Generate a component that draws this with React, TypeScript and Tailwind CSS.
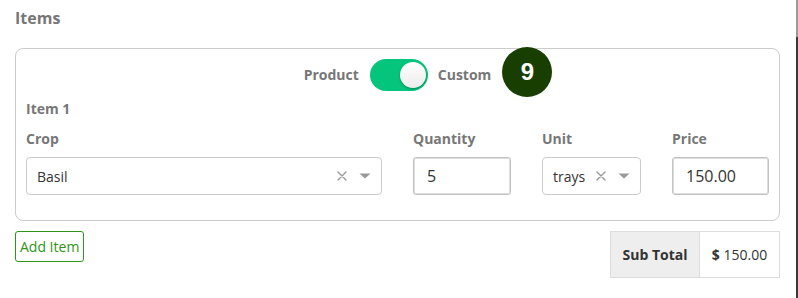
import React from "react";

const Caret = () => (
  <svg width="12" height="6" viewBox="0 0 12 6" className="shrink-0">
    <path d="M0.5 0.5 L11.5 0.5 L6 5.5 Z" fill="#999" />
  </svg>
);

const Clear = () => (
  <svg width="10" height="10" viewBox="0 0 10 10" className="shrink-0">
    <path d="M1 1 L9 9 M9 1 L1 9" stroke="#999" strokeWidth="1.4" strokeLinecap="round" />
  </svg>
);

const Label = ({ children }: { children: React.ReactNode }) => (
  <div className="text-[14px] leading-[20px] font-bold text-[#777] h-[20px] mb-[8px]">{children}</div>
);

export default function App() {
  return (
    <div
      className="flex h-[298px] w-[798px] bg-white overflow-hidden"
      style={{ fontFamily: '"Open Sans", "Noto Sans", sans-serif' }}
    >
      <div className="flex-1 pl-[15px] pr-[16px] pt-[6px]">
        <h2 className="text-[16px] leading-[24px] font-bold text-[#777]">Items</h2>
        <div className="mt-[18px] border border-[#cccccc] rounded-[8px] px-[10px] pt-[10px] pb-[25px]">
          <div className="flex justify-center items-center h-[32px]">
            <span className="text-[14px] leading-[20px] font-bold text-[#777]">Product</span>
            <div className="ml-[11px] w-[58px] h-[32px] rounded-full bg-[#05c47c] flex items-center justify-end pr-[2px]">
              <div className="w-[26px] h-[26px] rounded-full bg-gradient-to-b from-white to-[#ececec] shadow-[0_1px_2px_rgba(0,0,0,0.35)]" />
            </div>
            <span className="relative ml-[10px] text-[14px] leading-[20px] font-bold text-[#777]">
              Custom
              <span className="absolute left-[calc(100%+11px)] top-[-18px] w-[50px] h-[50px] rounded-full bg-[#183e02] flex items-center justify-center text-white text-[24px] font-bold leading-none font-['Liberation_Sans',Arial,sans-serif]">
                9
              </span>
            </span>
          </div>
          <div className="mt-[8px] text-[14px] leading-[20px] font-bold text-[#777]">Item 1</div>
          <div className="mt-[10px] grid grid-cols-[1fr_98px_99px_97px] gap-x-[31px]">
            <div>
              <Label>Crop</Label>
              <div className="h-[38px] border border-[#cccccc] rounded-[4px] flex items-center pl-[10px] pr-[10px]">
                <span className="flex-1 text-[14px] text-[#333]">Basil</span>
                <Clear />
                <span className="ml-[12px]">
                  <Caret />
                </span>
              </div>
            </div>
            <div>
              <Label>Quantity</Label>
              <div className="h-[38px] border border-[#c2c2c2] rounded-[3px] shadow-[inset_0_0_0_1px_#dedede] flex items-center pl-[13px] text-[16px] text-[#333]">
                5
              </div>
            </div>
            <div>
              <Label>Unit</Label>
              <div className="h-[38px] border border-[#cccccc] rounded-[4px] flex items-center pl-[10px] pr-[10px]">
                <span className="flex-1 text-[14px] text-[#333]">trays</span>
                <Clear />
                <span className="ml-[12px]">
                  <Caret />
                </span>
              </div>
            </div>
            <div>
              <Label>Price</Label>
              <div className="h-[38px] border border-[#c2c2c2] rounded-[3px] shadow-[inset_0_0_0_1px_#dedede] flex items-center pl-[13px] text-[16px] text-[#333]">
                150.00
              </div>
            </div>
          </div>
        </div>
        <div className="mt-[10px] flex justify-between items-start">
          <button className="h-[31px] px-[4px] border border-[#2f9418] rounded-[3px] text-[14px] text-[#2f9418] bg-white">
            Add Item
          </button>
          <div className="flex border border-[#dddddd] h-[47px] text-[14px] text-[#333]">
            <div className="w-[89px] bg-[#eeeeee] border-r border-[#dddddd] flex items-center justify-center font-bold">
              Sub Total
            </div>
            <div className="w-[79px] flex items-center justify-center">
              <span className="font-bold">$</span>&nbsp;150.00
            </div>
          </div>
        </div>
      </div>
      <div className="w-[2px] flex flex-col">
        <div className="h-[37px] bg-[#9a9a9a]" />
        <div className="flex-1 bg-[#3a3a3a]" />
      </div>
    </div>
  );
}
